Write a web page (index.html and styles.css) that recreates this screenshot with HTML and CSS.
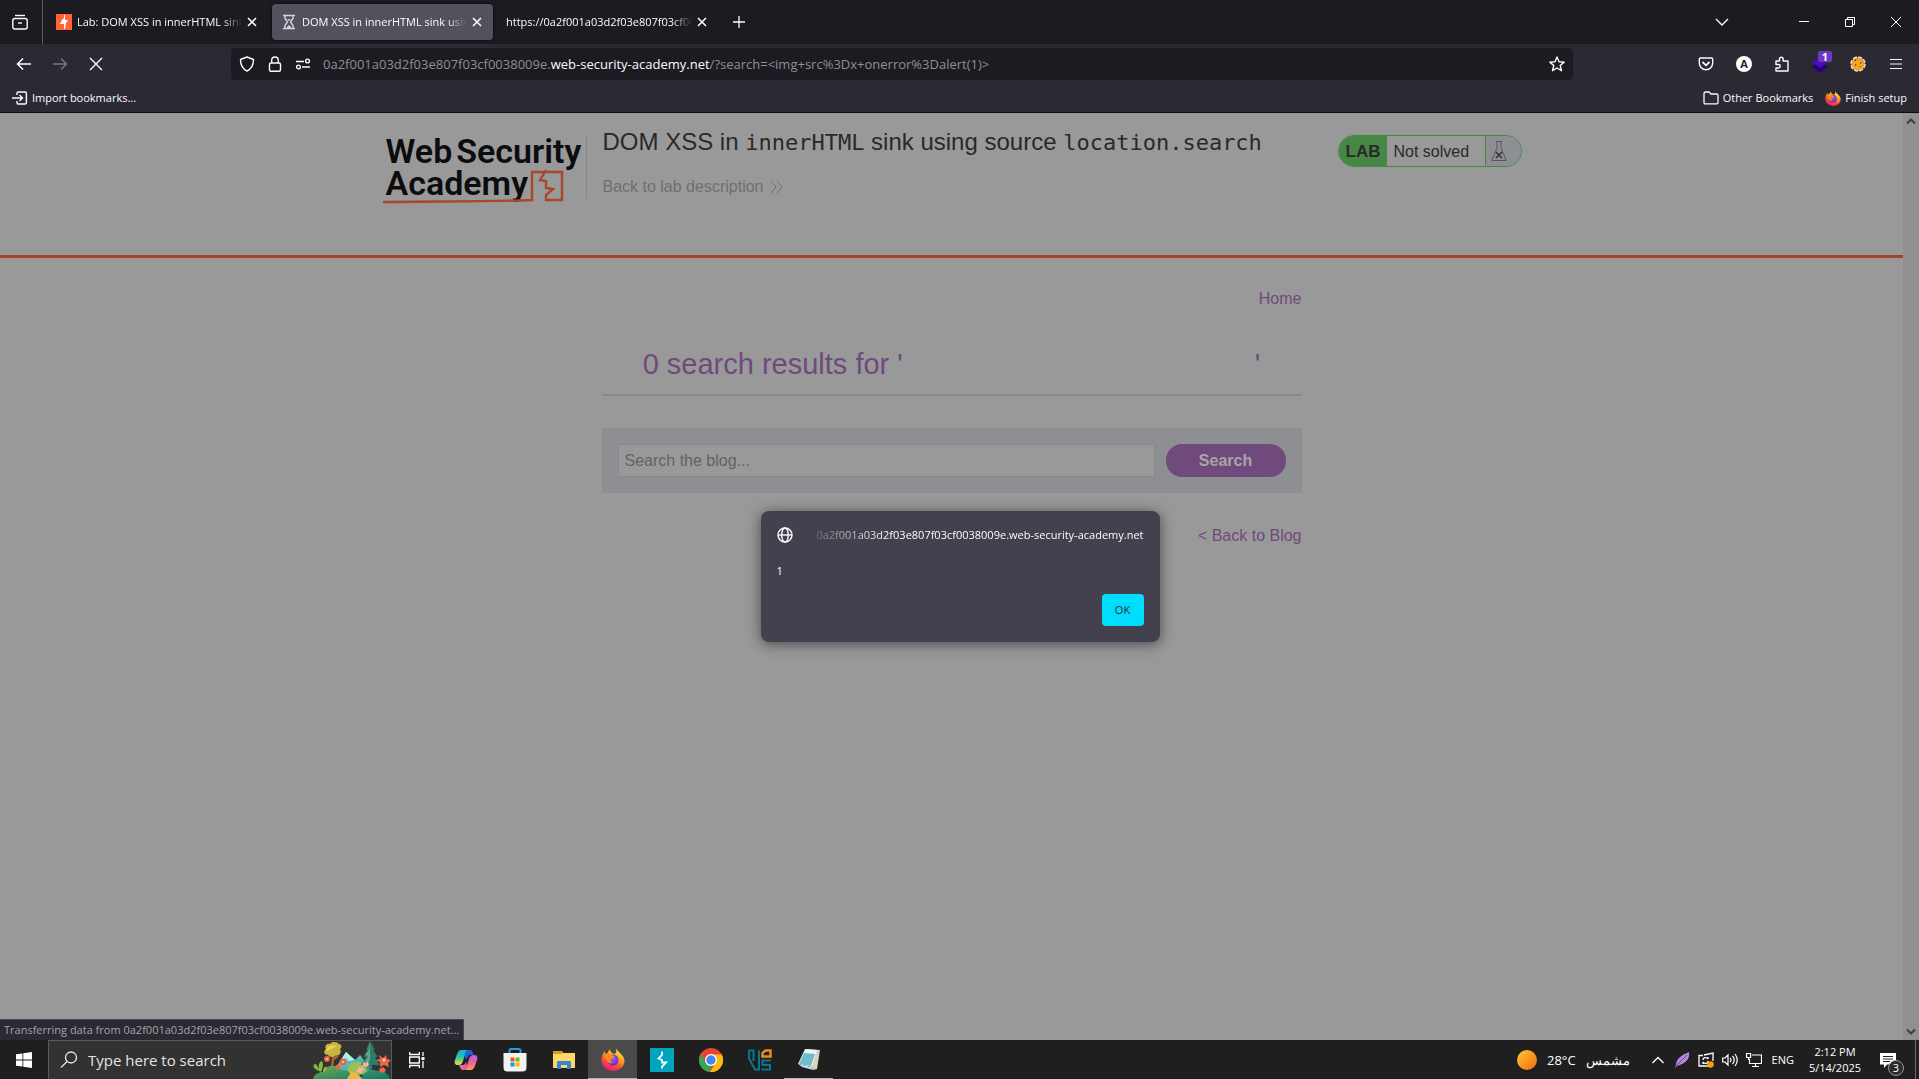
FILE: index.html
```html
<!DOCTYPE html>
<html lang="en">
<head>
<meta charset="utf-8">
<meta name="viewport" content="width=device-width, initial-scale=1">
<title>DOM XSS in innerHTML sink using source location.search</title>
<link rel="stylesheet" href="styles.css">
</head>
<body>
<svg class="defs" width="0" height="0" aria-hidden="true">
  <defs>
    <linearGradient id="ffBody" x1=".8" y1="0" x2=".3" y2="1"><stop offset="0" stop-color="#fff14a"/><stop offset=".35" stop-color="#ffae1e"/><stop offset=".65" stop-color="#ff5533"/><stop offset="1" stop-color="#e2167c"/></linearGradient>
    <radialGradient id="ffGlobe" cx=".5" cy=".4" r=".6"><stop offset="0" stop-color="#a45bf5"/><stop offset="1" stop-color="#5b2bc4"/></radialGradient>
    <symbol id="firefox" viewBox="0 0 24 24">
      <path fill="url(#ffBody)" d="M15 1c1 2 2 3 4 5 3 3 4.500 5 4.500 8A11.500 10 0 0 1 12 24 11.500 11 0 0 1 .5 13C.5 9 2 6 4 4v3c1-1 2-1 3-1 0-2 1-3 2-3.500C9 5 11 6 13 7c2 0 3-3 2-6z"/>
      <circle cx="12" cy="13" r="5.500" fill="url(#ffGlobe)"/>
      <path fill="#ff8a1c" d="M4 8c3-2 5-1 7 0l3 2c-1 1-3 1-4 2-1 2 0 3 2 4-4 1-7-1-8-8z"/>
    </symbol>
    <symbol id="close" viewBox="0 0 10 10"><path d="M1 1l8 8M9 1L1 9" fill="none" stroke="currentColor" stroke-width="1.600"/></symbol>
  </defs>
</svg>

<header class="browser">
  <div class="tabstrip">
    <button class="icon-btn view-btn" aria-label="Firefox View">
      <svg width="16" height="16" viewBox="0 0 16 16" fill="none" stroke="#fbfbfe" stroke-width="1.400"><path d="M3 1.500h10"/><rect x=".8" y="4.500" width="14.400" height="10.500" rx="2"/><path d="M6 9h4"/></svg>
    </button>
    <div class="tabs" role="tablist">
      <div class="tab" role="tab">
        <svg width="16" height="16" viewBox="0 0 16 16"><path fill="#ff6633" d="M0 0h16v16H0z"/><path fill="#fff" d="M8 1h1v5h3l-2 3-1 6H8v-5H4l2-4 2-2z"/></svg>
        <span class="tab-title">Lab: DOM XSS in innerHTML sink using source</span>
        <button class="tab-close" aria-label="Close tab"><svg width="10" height="10"><use href="#close"/></svg></button>
      </div>
      <div class="tab active" role="tab" aria-selected="true">
        <svg width="16" height="16" viewBox="0 0 16 16" fill="none" stroke="#d5d5dc" stroke-width="1.400"><path d="M2 1.500h12M2 14.500h12M4 2v2.500L6.500 8 4 11.500V14M12 2v2.500L9.500 8l2.500 3.500V14"/><path fill="#d5d5dc" stroke="none" d="M6 13l2-2 2 2v1H6zM6 5h4L8 7z"/></svg>
        <span class="tab-title">DOM XSS in innerHTML sink using source</span>
        <button class="tab-close" aria-label="Close tab"><svg width="10" height="10"><use href="#close"/></svg></button>
      </div>
      <div class="tab" role="tab">
        <span class="tab-title">https://0a2f001a03d2f03e807f03cf0038009e</span>
        <button class="tab-close" aria-label="Close tab"><svg width="10" height="10"><use href="#close"/></svg></button>
      </div>
    </div>
    <button class="icon-btn new-tab" aria-label="New tab"><svg width="12" height="12" viewBox="0 0 12 12" stroke="#fbfbfe" stroke-width="1.300"><path d="M6 0v12M0 6h12"/></svg></button>
    <div class="window-controls">
      <button class="icon-btn" aria-label="List all tabs"><svg width="14" height="14" viewBox="0 0 14 14" fill="none" stroke="#fbfbfe" stroke-width="1.400"><path d="M1 4l6 6 6-6"/></svg></button>
      <button class="icon-btn" aria-label="Minimize"><svg width="10" height="10" viewBox="0 0 10 10"><path fill="#fff" d="M0 4h10v1H0z"/></svg></button>
      <button class="icon-btn" aria-label="Restore"><svg width="10" height="10" viewBox="0 0 10 10" fill="none" stroke="#fff"><path d="M.5 2.500h7v7h-7zM2.500 2V.5h7v7H8"/></svg></button>
      <button class="icon-btn" aria-label="Close"><svg width="10" height="10" viewBox="0 0 10 10" stroke="#fff"><path d="M0 0l10 10M10 0L0 10"/></svg></button>
    </div>
  </div>

  <nav class="toolbar" aria-label="Navigation">
    <div class="nav-buttons">
      <button class="icon-btn" aria-label="Back"><svg width="16" height="16" viewBox="0 0 16 16" fill="none" stroke="#fbfbfe" stroke-width="1.500"><path d="M15 8H2M7 2.500L1.500 8 7 13.500"/></svg></button>
      <button class="icon-btn" aria-label="Forward" disabled><svg width="16" height="16" viewBox="0 0 16 16" fill="none" stroke="#76757d" stroke-width="1.500"><path d="M1 8h13M9 2.500L14.500 8 9 13.500"/></svg></button>
      <button class="icon-btn" aria-label="Stop"><svg width="16" height="16" viewBox="0 0 16 16" stroke="#fbfbfe" stroke-width="1.400"><path d="M2 2l12 12M14 2L2 14"/></svg></button>
    </div>
    <div class="urlbar">
      <svg width="16" height="16" viewBox="0 0 16 16" fill="none" stroke="#fbfbfe" stroke-width="1.400" stroke-linejoin="round"><path d="M8 1l6.500 2.500c0 5-1.500 9-6.500 11.500C3 12.500 1.500 8.500 1.500 3.500z"/></svg>
      <svg width="16" height="16" viewBox="0 0 16 16" fill="none" stroke="#fbfbfe" stroke-width="1.400"><rect x="2.500" y="7" width="11" height="8.300" rx="1.500"/><path d="M4.700 7V4.300a3.300 3.300 0 0 1 6.600 0V7"/></svg>
      <svg width="16" height="16" viewBox="0 0 16 16" fill="none" stroke="#fbfbfe" stroke-width="1.400"><path d="M1 5.500h8M7 11h8"/><circle cx="12.500" cy="5" r="1.900"/><circle cx="3.500" cy="11" r="1.900"/></svg>
      <div class="url" role="textbox" aria-label="Address" contenteditable="true" spellcheck="false">0a2f001a03d2f03e807f03cf0038009e.<b>web-security-academy.net</b>/?search=&lt;img+src%3Dx+onerror%3Dalert(1)&gt;</div>
      <button class="icon-btn" aria-label="Bookmark this page"><svg width="16" height="16" viewBox="0 0 16 16" fill="none" stroke="#fbfbfe" stroke-width="1.400" stroke-linejoin="round"><path d="M8 1l2 4.700 5.200.4-4 3.400 1.300 5.200L8 12l-4.500 2.700 1.300-5.200-4-3.400L6 5.700z"/></svg></button>
    </div>
    <div class="extensions">
      <button class="icon-btn" aria-label="Save to Pocket"><svg width="16" height="16" viewBox="0 0 16 16" fill="none" stroke="#fbfbfe" stroke-width="1.400"><path d="M2.500 2h11c.8 0 1.200.5 1.200 1.200V7a6.700 6.700 0 0 1-13.400 0V3.200C1.300 2.500 1.700 2 2.500 2z"/><path d="M4.500 6L8 9.300 11.500 6" stroke-width="1.800"/></svg></button>
      <button class="icon-btn" aria-label="Account"><span class="avatar">A</span></button>
      <button class="icon-btn" aria-label="Extensions"><svg width="16" height="16" viewBox="0 0 16 16" fill="none" stroke="#fbfbfe" stroke-width="1.400" stroke-linejoin="round"><path d="M2 5h3.500V3a1.800 1.800 0 0 1 3.600 0v2H14v10H2v-3h2.500a1.700 1.700 0 0 0 0-3.500H2z"/></svg></button>
      <button class="icon-btn badge-host" aria-label="Container"><svg width="18" height="18" viewBox="0 0 18 18"><path fill="#270079" d="M9 6l8 6-8 6-8-6z"/><path fill="#4b0bb5" d="M9 1l8 6-8 6-8-6z"/></svg><span class="badge">1</span></button>
      <button class="icon-btn" aria-label="FoxyProxy"><svg width="16" height="16" viewBox="0 0 16 16"><circle cx="8" cy="8" r="7" fill="#e8942c" stroke="#ddd" stroke-width="1.600" stroke-dasharray="4 1.500"/><path fill="#f5a623" d="M2 6l4-1 5-3 1 4 2 4-4 4-5-1-3-3z"/><path fill="#7b3d06" d="M5 8l2 1-2 1zM10 6l2 1-2 1zM9 11l2-1v1zM4 5l2-2v2z"/></svg></button>
      <button class="icon-btn" aria-label="Menu"><svg width="12" height="12" viewBox="0 0 12 12"><path fill="#fbfbfe" d="M0 1h12v1H0zM0 5.500h12v1H0zM0 10h12v1H0z"/></svg></button>
    </div>
  </nav>

  <div class="bookmarks">
    <a class="bookmark" href="#"><svg width="16" height="16" viewBox="0 0 16 16" fill="none" stroke="#fbfbfe" stroke-width="1.400"><path d="M5 5V3.200C5 2.500 5.500 2 6.200 2h7c.8 0 1.200.5 1.200 1.200v9.600c0 .7-.4 1.200-1.200 1.200h-7c-.7 0-1.200-.5-1.200-1.200V11M0 8h10M7.500 5l3 3-3 3"/></svg>Import bookmarks...</a>
    <span class="push"></span>
    <a class="bookmark" href="#"><svg width="16" height="16" viewBox="0 0 16 16" fill="none" stroke="#fbfbfe" stroke-width="1.300"><path d="M1 12.500v-9C1 2.600 1.500 2 2.300 2H6l2 2h5.700c.8 0 1.300.5 1.300 1.300v7.200c0 .8-.5 1.300-1.300 1.300H2.300c-.8 0-1.300-.5-1.300-1.300z"/></svg>Other Bookmarks</a>
    <a class="bookmark" href="#"><svg width="16" height="16"><use href="#firefox"/></svg>Finish setup</a>
  </div>
</header>

<div class="viewport">
  <main class="page">
    <header class="lab-header">
      <div class="lab-inner">
        <a class="logo" href="#" aria-label="Web Security Academy">
          <span class="logo-line"><span>Web</span><span>Security</span></span>
          <span class="logo-line">Academy</span>
          <svg class="logo-art" width="200" height="70" viewBox="0 0 200 70" fill="none" stroke="#a8472b"><path d="M1 52c50-1 100 0 149-2V22h30v28h-16l0-5 7-6-7-1v-7l-6-1 6-10" stroke-width="2.400"/></svg>
        </a>
        <div class="lab-title">
          <h1>DOM XSS in <code>innerHTML</code> sink using source <code>location.search</code></h1>
          <a class="back" href="#">Back to lab description<svg width="13" height="12" viewBox="0 0 13 12" fill="none" stroke="#6f6f71"><path d="M1 0l5 6-5 6M7 0l5 6-5 6"/></svg></a>
        </div>
        <div class="lab-status">
          <span class="lab-tag">LAB</span>
          <span class="lab-text">Not solved</span>
          <span class="lab-flask"><svg width="16" height="20" viewBox="0 0 16 20" fill="none" stroke="#56585a"><path d="M4.500.5h7M6 1v6L.7 19.500h14.600L10 7V1"/><path d="M5 11l6 6M11 11l-6 6" stroke="#333" stroke-width="1.600"/></svg></span>
        </div>
      </div>
    </header>

    <section class="blog">
      <nav class="blog-nav"><a href="#">Home</a></nav>
      <h2>0 search results for '<span class="missing-image"></span>'</h2>
      <form class="search">
        <input type="text" placeholder="Search the blog..." aria-label="Search the blog">
        <button type="button">Search</button>
      </form>
      <a class="blog-back" href="#">&lt; Back to Blog</a>
    </section>
  </main>
  <div class="scrollbar" aria-hidden="true">
    <svg width="10" height="8" viewBox="0 0 10 8" fill="none" stroke="#414143" stroke-width="2.200"><path d="M1 6.500l4-4 4 4"/></svg>
    <svg width="10" height="8" viewBox="0 0 10 8" fill="none" stroke="#414143" stroke-width="2.200"><path d="M1 1.500l4 4 4-4"/></svg>
  </div>

  <div class="dialog" role="alertdialog" aria-label="Page alert">
    <div class="dialog-head">
      <svg width="16" height="16" viewBox="0 0 16 16" fill="none" stroke="#fbfbfe" stroke-width="1.400"><circle cx="8" cy="8" r="7"/><ellipse cx="8" cy="8" rx="3.300" ry="7"/><path d="M1 8h14"/></svg>
      <div class="origin"><span>0a2f001a03d2f03e807f03cf0038009e.web-security-academy.net</span></div>
    </div>
    <p>1</p>
    <button class="ok">OK</button>
  </div>
  <div class="status">Transferring data from 0a2f001a03d2f03e807f03cf0038009e.web-security-academy.net...</div>
</div>

<footer class="taskbar">
  <button class="task start" aria-label="Start"><svg width="16" height="16" viewBox="0 0 16 16" fill="#fff"><path d="M0 2.300L6.500 1.400v6.200H0zM7.300 1.300L16 0v7.600H7.300zM0 8.400h6.500v6.200L0 13.700zM7.300 8.400H16V16l-8.700-1.300z"/></svg></button>
  <label class="task-search">
    <svg width="18" height="18" viewBox="0 0 18 18" fill="none" stroke="#e8e8e8" stroke-width="1.300"><circle cx="11" cy="6.500" r="5.500"/><path d="M7 10.500L1 16.500"/></svg>
    <input type="text" placeholder="Type here to search">
    <svg class="scene" width="78" height="38" viewBox="0 0 78 38">
      <defs><linearGradient id="hill" x2="1" y2="1"><stop offset="0" stop-color="#74a850"/><stop offset="1" stop-color="#087a70"/></linearGradient><linearGradient id="mount" x2="1" y2="1"><stop offset="0" stop-color="#84ddd6"/><stop offset="1" stop-color="#1b8f93"/></linearGradient></defs>
      <path d="M19 26l2-15-4-4M21 14l6-5M21 18l4-4" stroke="#a5642a" stroke-width="2.500" fill="none"/>
      <path fill="#c9b53c" d="M15 14c-4 0-5-4-2-6-2-3 1-6 4-5 2-3 8-2 9 0 3 0 3 4 1 5 2 4-1 7-4 6-2 2-6 3-8 0z"/>
      <path fill="#e6cf55" d="M14 10c-2-2 1-5 3-5 2-2 6-1 7 1-4 0-6 3-10 4z"/>
      <path fill="url(#mount)" d="M18 34l15-23 9 8 5-5 16 20z"/><path fill="#b6efdf" d="M33 11l-5 8 5-2 3 3 6-1z"/>
      <path fill="#9cc053" d="M36 24c8-6 15-4 19 8l-22 3z"/>
      <path fill="#2a7d6c" d="M57 0l5 9h-2l5 7h-3l5 8H48l5-8h-3l5-7h-2zM56 23h3v7h-3z"/><path fill="#58a783" d="M57 0v20l-6 2 4-7-3-1 4-6z"/>
      <path fill="url(#hill)" d="M0 38c1-5 6-7 10-7 2-7 13-9 19-2 7 0 10 4 13 9zM48 38c2-7 10-11 17-8 6 0 11 3 12 8z"/>
      <path fill="#e9ba3f" d="M34 38c2-5 5-4 2-8 7 1 11 4 13 8z"/>
      <path fill="#89b640" d="M4 29c-5-3-4-6-1-6 1 2 2 3 3 5-1-4 0-7 3-8 2 4 0 8-1 11zM10 30c0-3 2-5 4-4 0 3-2 5-4 5z"/>
      <g fill="#e96748"><circle cx="14" cy="18" r="3"/><circle cx="30" cy="21" r="3.500"/><circle cx="25" cy="26" r="2.500"/><path d="M66 14l4 3 3-3 1 4 4 1-3 3 1 4-5-2-4 2v-5l-4-2 4-1zM66 28l4-2 3 3-2 3-4-1z"/></g>
      <path fill="#ffb1a1" d="M46 26l2 1 2-2v3l2 1-3 1-1 3-2-2-3 1 1-3zM50 21l3 1 2-2 1 4-3 2-3-1z"/>
      <g fill="#ffd4a2"><circle cx="14" cy="18" r="1"/><circle cx="30" cy="21" r="1"/><circle cx="71" cy="19" r="1.500"/></g>
    </svg>
  </label>
  <button class="task" aria-label="Task view"><svg width="16" height="16" viewBox="0 0 16 16" fill="none" stroke="#fff" stroke-width="1.300"><path d="M.7 0v2.500h9.600V0M.7 16v-2.500h9.600V16M.7 5h9.600v6H.7zM14 0v4M14 9v7"/><path fill="#fff" stroke="none" d="M12.500 5h3v3h-3z"/></svg></button>
  <button class="task" aria-label="Copilot"><svg width="24" height="24" viewBox="0 0 24 24"><defs><linearGradient id="cpA" x2="0" y2="1"><stop offset="0" stop-color="#22a7f0"/><stop offset=".45" stop-color="#23c3a4"/><stop offset="1" stop-color="#f3dc36"/></linearGradient><linearGradient id="cpB" x2="0" y2="1"><stop offset="0" stop-color="#b65cf0"/><stop offset=".5" stop-color="#f0628c"/><stop offset="1" stop-color="#ff9a55"/></linearGradient></defs><path fill="#1c62df" d="M8 2h8c2 0 3 2 3.500 5H15l-3 5z"/><path fill="url(#cpA)" d="M7 2h6c-2 2-2 5-4 11-1 3-2 4-5 4-3 0-4-2-3-5l2-6c1-2 2-4 4-4z"/><path fill="url(#cpB)" d="M17 22h-6c2-2 2-5 4-11 1-3 2-4 5-4 3 0 4 2 3 5l-2 6c-1 2-2 4-4 4z"/><path fill="#ee5f9d" d="M5 17h4c2 0 2-1 3-4l1 5c-1 3-1 4-4 4-2 0-3-2-4-5z"/></svg></button>
  <button class="task" aria-label="Microsoft Store"><svg width="24" height="24" viewBox="0 0 24 24"><path d="M6.500 6V2.500c0-1 .5-1.500 1.500-1.500h8c1 0 1.500.5 1.500 1.500V6" fill="none" stroke="#1ba1e8" stroke-width="2"/><path fill="#f2f2f2" d="M.5 5h23v14c0 3-1 4.500-4 4.500H4.500c-3 0-4-1.500-4-4.500z"/><path fill="#f25022" d="M7.500 9.500h4v4h-4z"/><path fill="#7fba00" d="M12.500 9.500h4v4h-4z"/><path fill="#00a4ef" d="M7.500 14.500h4v4h-4z"/><path fill="#ffb900" d="M12.500 14.500h4v4h-4z"/></svg></button>
  <button class="task" aria-label="File Explorer"><svg width="24" height="24" viewBox="0 0 24 24"><path fill="#d99b13" d="M1 3h9l1.500 2H23v5H1z"/><path fill="#ffd767" d="M1 6h8l2-1h12v15H1z"/><path fill="#3386d6" d="M5 21v-6c0-1.500.5-2 2-2h10c1.500 0 2 .5 2 2v6h-4v-4H9v4z"/></svg></button>
  <button class="task running current" aria-label="Firefox"><svg width="24" height="24"><use href="#firefox"/></svg></button>
  <button class="task" aria-label="Burp Suite"><svg width="24" height="24" viewBox="0 0 24 24"><path fill="#00a5bd" d="M0 0h24v24H0z"/><path fill="none" stroke="#fff" stroke-width="1.800" d="M12 3.500V7L8.500 10.500l3.500 1.500v2.500h4L12 18.500v2"/></svg></button>
  <button class="task" aria-label="Chrome"><svg width="24" height="24" viewBox="0 0 24 24"><circle cx="12" cy="12" r="12" fill="#ea4335"/><path fill="#34a853" d="M1.600 6L7 15l5 3-1 6A12 12 0 0 1 1.600 6z"/><path fill="#fbbc05" d="M12 6.500h10.700A12 12 0 0 1 11 24l5.500-9z"/><circle cx="12" cy="12" r="6" fill="#fff"/><circle cx="12" cy="12" r="4.700" fill="#4285f4"/></svg></button>
  <button class="task" aria-label="Virtual machine"><svg width="24" height="24" viewBox="0 0 24 24" fill="none" stroke="#0a7590" stroke-width="2"><path d="M5.500 13V2.500H1v8l6 11h4V2.500"/><path d="M23 12.500h-8.500V17H22v4.500h-8.500"/><path stroke="#f08a1b" stroke-width="2.500" d="M14.500 8.500V5l3-2.500h5v6z"/></svg></button>
  <button class="task running" aria-label="Notepad"><svg width="24" height="24" viewBox="0 0 24 24"><path fill="#d8d3bd" d="M10 2l13 1-3 19-4 1z"/><path fill="#e7f5f8" d="M8 2l12 1-5 17L1 17z"/><path fill="#71bccb" d="M7 6l11 1-4 12-12-2z"/><path fill="#b9e1e8" d="M1 17l14 3 1 3L5 20z"/></svg></button>
  <span class="push"></span>
  <div class="weather"><svg width="20" height="20" viewBox="0 0 20 20"><defs><linearGradient id="sun" x2="1" y2="1"><stop offset="0" stop-color="#ffc83c"/><stop offset="1" stop-color="#f4680b"/></linearGradient></defs><circle cx="10" cy="10" r="10" fill="url(#sun)"/></svg><span>28°C</span><span lang="ar" dir="rtl">مشمس</span></div>
  <div class="tray">
    <svg width="16" height="16" viewBox="0 0 16 16" fill="none" stroke="#fff" stroke-width="1.300"><path d="M2.500 11L8 5.500l5.500 5.500"/></svg>
    <svg width="16" height="16" viewBox="0 0 16 16"><path fill="#b887e0" d="M15 0c1 6-2 11-12 14l-2 2 1-4C3 6 8 3 15 0z"/><path d="M1 15L13 3" stroke="#6d3d99"/></svg>
    <svg width="16" height="16" viewBox="0 0 16 16" fill="none" stroke="#fff" stroke-width="1.300"><path d="M10 14H1V3.500h4M6 3l9-2v8"/><path d="M5 8c0-3 4-3 5-1V5M10 9c0 3-4 3-5 1v2"/><circle cx="12.500" cy="12.500" r="3.300" fill="#ff9a0a" stroke="none"/></svg>
    <svg width="16" height="16" viewBox="0 0 16 16" fill="none" stroke="#fff" stroke-width="1.200"><path d="M.7 6v4H3l3 3V3L3 6zM8 6q2 2 0 4M10.500 4q3.500 4 0 8M13 2q4.500 6 0 12"/></svg>
    <svg width="16" height="16" viewBox="0 0 16 16" fill="none" stroke="#fff" stroke-width="1.200"><path d="M6 3h9.500v8.500H3.500V7M6 14.500h7M9.500 11.500v3M.6 1.500h4v4h-4zM2.600 6v2"/></svg>
    <span class="lang">ENG</span>
  </div>
  <div class="clock"><span>2:12 PM</span><span>5/14/2025</span></div>
  <button class="notify" aria-label="Notifications"><svg width="16" height="16" viewBox="0 0 16 16"><path fill="#fff" d="M0 1h16v11.500H7L4 16v-3.500H0z"/><path stroke="#222" d="M3 4.500h10M3 7h10M3 9.500h7"/></svg><span class="count">3</span></button>
</footer>
</body>
</html>
```
FILE: styles.css
```css
* { box-sizing: border-box; }

body {
  margin: 0;
  min-height: 100vh;
  display: flex;
  flex-direction: column;
  background: #99999a;
  color: #fbfbfe;
  font: 11px/16px "Open Sans", "Noto Sans", sans-serif;
}

button, input { font: inherit; color: inherit; border: 0; background: none; padding: 0; }
a { color: inherit; text-decoration: none; }
svg { flex: none; display: block; }
.defs { position: absolute; }
.push { flex: 1; }

/* Browser chrome */
.browser { background: #2b2a33; border-bottom: 1px solid #0c0c0d; }
.icon-btn { display: flex; flex: none; align-items: center; justify-content: center; }

.tabstrip { display: flex; height: 44px; background: #1c1b22; }
.view-btn { width: 43px; padding-right: 2px; border-right: 1px solid #5b5a62; }
.tabs { display: flex; gap: 4px; padding: 4px; }
.tab {
  display: flex;
  align-items: center;
  gap: 5px;
  width: 221px;
  padding: 0 11px 0 9px;
  border-radius: 4px;
}
.tab.active { background: #52525e; box-shadow: 0 0 3px #000; }
.tab-title {
  flex: 1;
  overflow: hidden;
  white-space: nowrap;
  -webkit-mask-image: linear-gradient(to left, transparent, #000 20px);
  mask-image: linear-gradient(to left, transparent, #000 20px);
}
.tab-close { display: flex; }
.new-tab { width: 34px; }
.window-controls { display: flex; margin-left: auto; }
.window-controls .icon-btn { width: 46px; }
.window-controls .icon-btn:first-child { margin-right: 36px; }

.toolbar { display: flex; align-items: center; height: 40px; padding: 0 4px 0 6px; }
.nav-buttons, .extensions { display: flex; }
.toolbar .icon-btn { width: 36px; height: 32px; }
.urlbar {
  flex: 1;
  display: flex;
  align-items: center;
  gap: 12px;
  height: 32px;
  margin: 0 114px 0 117px;
  padding-left: 8px;
  border-radius: 4px;
  background: #1c1b22;
}
.toolbar .urlbar .icon-btn { width: 32px; }
.toolbar .extensions .icon-btn { width: 38px; }
.url { flex: 1; overflow: hidden; white-space: nowrap; font-size: 13px; line-height: 20px; color: #8f8f94; }
.url b { font-weight: 400; color: #fbfbfe; }
.avatar { width: 16px; border-radius: 50%; background: #fff; color: #222; font-weight: 700; }
.badge-host { position: relative; }
.badge {
  position: absolute;
  top: 3px;
  right: 7px;
  width: 14px;
  border-radius: 2px;
  background: #6a3bbf;
  font-weight: 700;
  line-height: 11px;
}

.bookmarks { display: flex; align-items: center; gap: 12px; height: 28px; padding: 0 12px; }
.bookmark { display: flex; align-items: center; gap: 4px; }

/* Page */
.viewport { position: relative; flex: 1; display: flex; }
.page { flex: 1; font-family: "Liberation Sans", Arial, sans-serif; font-size: 16px; line-height: 20px; color: #29292b; }
.scrollbar {
  display: flex;
  flex-direction: column;
  justify-content: space-between;
  align-items: center;
  width: 16px;
  padding: 4px 0;
  background: #909092;
}

.lab-header { height: 145px; padding-top: 15px; border-bottom: 3px solid #a0452b; }
.lab-inner { display: flex; align-items: flex-start; max-width: 1140px; margin: 0 auto; }
.logo {
  position: relative;
  display: block;
  width: 205px;
  height: 64px;
  margin-top: 7px;
  padding-left: 4px;
  border-right: 1px solid #858586;
  color: #0c0c0e;
  font: 600 34px/32px Roboto, sans-serif;
}
.logo-line { display: flex; gap: 4px; }
.logo-art { position: absolute; left: 0; top: 15px; }
.lab-title { flex: 1; padding-left: 16px; }
h1 { margin: 0 0 20px; font-size: 24px; font-weight: 400; line-height: 28px; }
h1 code { font: 22px/28px "DejaVu Sans Mono", monospace; }
.back { display: inline-flex; align-items: center; gap: 7px; color: #6f6f71; }
.lab-status {
  display: flex;
  height: 32px;
  margin-top: 7px;
  border: 1px solid #468746;
  border-radius: 16px;
  overflow: hidden;
  line-height: 32px;
}
.lab-tag { width: 48px; padding-left: 7px; background: #468746; font-size: 17px; font-weight: 700; }
.lab-text { width: 98px; padding-left: 7px; }
.lab-flask { display: flex; align-items: center; width: 36px; padding-left: 5px; border-left: 1px solid #468746; background: #8d8f93; }

.blog { display: flex; flex-direction: column; max-width: 700px; margin: 0 auto; padding-top: 31px; color: #704a7c; }
.blog-nav { text-align: right; }
h2 {
  margin: 19px 0 32px;
  padding: 19px 0 13px;
  border-bottom: 2px solid #89898a;
  text-align: center;
  font-size: 29px;
  font-weight: 400;
  line-height: 34px;
}
.missing-image { display: inline-block; width: 352px; }
.search { display: flex; gap: 11px; padding: 16px; background: #8d8f93; }
.search input { flex: 1; height: 33px; padding: 0 6px; border: 1px solid #87898b; background: #99999a; }
.search input::placeholder { color: #626264; opacity: 1; }
.search button { width: 120px; border-radius: 16px; background: #704a7c; color: #a5a5a6; font-weight: 700; }
.blog-back { align-self: flex-end; margin-top: 33px; }

/* Alert raised over the page */
.dialog {
  position: absolute;
  top: 398px;
  left: 50%;
  width: 399px;
  margin-left: -199px;
  padding: 16px;
  border-radius: 8px;
  background: #42414d;
  box-shadow: 0 2px 14px rgba(20, 20, 24, .6);
  display: flex;
  flex-direction: column;
}
.dialog-head { display: flex; align-items: center; gap: 4px; }
.origin {
  flex: 1;
  display: flex;
  justify-content: flex-end;
  overflow: hidden;
  white-space: nowrap;
  -webkit-mask-image: linear-gradient(to right, transparent, #000 90px);
  mask-image: linear-gradient(to right, transparent, #000 90px);
}
.dialog p { margin: 20px 0 15px; }
.ok { align-self: flex-end; width: 42px; height: 32px; border-radius: 4px; background: #00ddff; color: #2b2a33; }

.status {
  position: absolute;
  left: 0;
  bottom: 0;
  padding: 2px 4px;
  border: 1px solid #45444e;
  border-width: 1px 1px 0 0;
  background: #2b2a33;
  color: #a3a3a8;
  white-space: nowrap;
}

/* Windows taskbar */
.taskbar { display: flex; align-items: stretch; height: 39px; background: #1f1f1f; color: #fff; }
.task { display: flex; flex: none; align-items: center; justify-content: center; width: 49px; }
.start { width: 48px; }
.running { border-bottom: 1px solid #b5b5b5; }
.current { background: #4a4a4a; }
.task-search {
  display: flex;
  align-items: center;
  gap: 10px;
  width: 344px;
  padding-left: 11px;
  border: 1px solid #5b5b5b;
  border-bottom: 0;
  background: #323232;
}
.task-search input { flex: 1; min-width: 0; font-size: 15px; line-height: 20px; }
.task-search input::placeholder { color: #e4e4e4; opacity: 1; }
.weather { display: flex; align-items: center; gap: 10px; margin-right: 20px; font-size: 13px; }
.tray { display: flex; align-items: center; gap: 8px; }
.lang { margin-left: 2px; }
.clock { display: flex; flex-direction: column; justify-content: center; align-items: center; width: 82px; }
.notify { position: relative; display: flex; align-items: center; width: 40px; padding-left: 4px; border-right: 1px solid #6f6f6f; margin-right: 3px; }
.count {
  position: absolute;
  left: 12px;
  bottom: 3px;
  width: 16px;
  border: 1px solid #999;
  border-radius: 50%;
  background: #2b2b2b;
  line-height: 14px;
}
```
